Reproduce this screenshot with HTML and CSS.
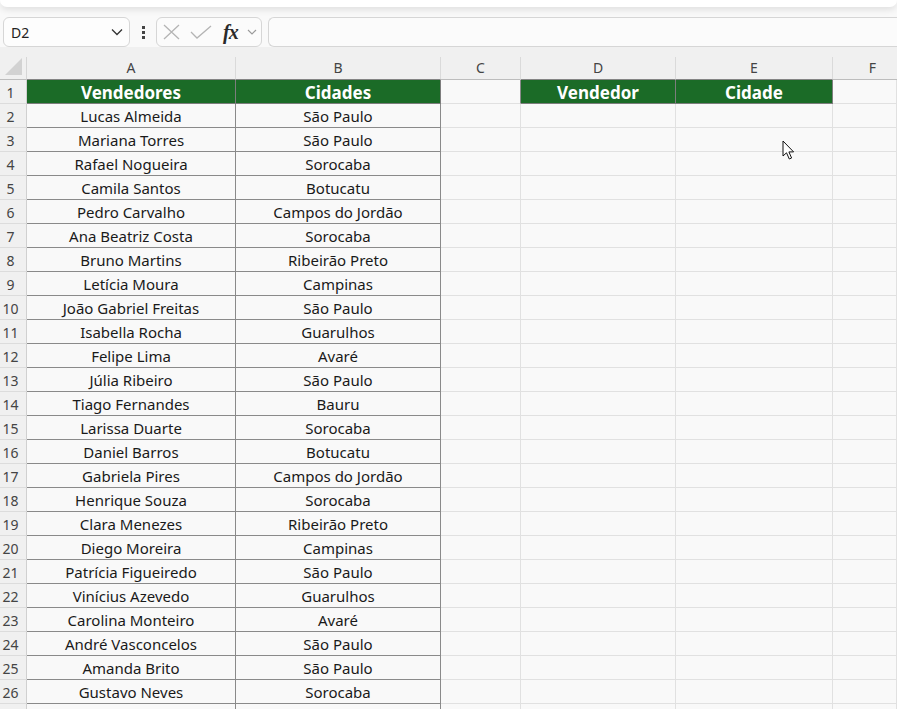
FILE: index.html
```html
<!DOCTYPE html>
<html lang="pt-BR">
<head>
    <meta charset="UTF-8">
    <title>Planilha - Vendedores</title>
    <link rel="stylesheet" href="styles.css">
</head>
<body>
    <div class="topbar"></div>

    <div class="formula-bar">
        <div class="name-box">
            <span>D2</span>
            <svg class="chev" width="12" height="8" viewBox="0 0 12 8"><path d="M1 1.5 L6 6.5 L11 1.5" fill="none" stroke="#333" stroke-width="1.3"/></svg>
        </div>
        <div class="dots"><span></span><span></span><span></span></div>
        <div class="fx-box">
            <svg width="17" height="16" viewBox="0 0 17 16"><path d="M1 1 L16 15 M16 1 L1 15" stroke="#b4b4b4" stroke-width="1.3" fill="none"/></svg>
            <svg width="22" height="14" viewBox="0 0 22 14"><path d="M1 7 L7 13 L21 1" stroke="#b4b4b4" stroke-width="1.3" fill="none"/></svg>
            <span class="fx">fx</span>
            <svg width="10" height="6" viewBox="0 0 10 6"><path d="M1 1 L5 5 L9 1" fill="none" stroke="#999" stroke-width="1.1"/></svg>
        </div>
        <div class="formula-input"></div>
    </div>

    <div class="sheet">
        <div class="col-heads">
            <div class="corner"><span class="tri"></span></div>
            <div class="ch dark">A</div>
            <div class="ch dark">B</div>
            <div class="ch">C</div>
            <div class="ch dark">D</div>
            <div class="ch dark">E</div>
            <div class="ch">F</div>
        </div>

        <div class="row"><div class="rh">1</div><div class="c head">Vendedores</div><div class="c head">Cidades</div><div class="c edge"></div><div class="c head">Vendedor</div><div class="c head">Cidade</div><div class="c"></div></div>
        <div class="row"><div class="rh">2</div><div class="c t">Lucas Almeida</div><div class="c t">São Paulo</div><div class="c"></div><div class="c"></div><div class="c"></div><div class="c"></div></div>
        <div class="row"><div class="rh">3</div><div class="c t">Mariana Torres</div><div class="c t">São Paulo</div><div class="c"></div><div class="c"></div><div class="c"></div><div class="c"></div></div>
        <div class="row"><div class="rh">4</div><div class="c t">Rafael Nogueira</div><div class="c t">Sorocaba</div><div class="c"></div><div class="c"></div><div class="c"></div><div class="c"></div></div>
        <div class="row"><div class="rh">5</div><div class="c t">Camila Santos</div><div class="c t">Botucatu</div><div class="c"></div><div class="c"></div><div class="c"></div><div class="c"></div></div>
        <div class="row"><div class="rh">6</div><div class="c t">Pedro Carvalho</div><div class="c t">Campos do Jordão</div><div class="c"></div><div class="c"></div><div class="c"></div><div class="c"></div></div>
        <div class="row"><div class="rh">7</div><div class="c t">Ana Beatriz Costa</div><div class="c t">Sorocaba</div><div class="c"></div><div class="c"></div><div class="c"></div><div class="c"></div></div>
        <div class="row"><div class="rh">8</div><div class="c t">Bruno Martins</div><div class="c t">Ribeirão Preto</div><div class="c"></div><div class="c"></div><div class="c"></div><div class="c"></div></div>
        <div class="row"><div class="rh">9</div><div class="c t">Letícia Moura</div><div class="c t">Campinas</div><div class="c"></div><div class="c"></div><div class="c"></div><div class="c"></div></div>
        <div class="row"><div class="rh">10</div><div class="c t">João Gabriel Freitas</div><div class="c t">São Paulo</div><div class="c"></div><div class="c"></div><div class="c"></div><div class="c"></div></div>
        <div class="row"><div class="rh">11</div><div class="c t">Isabella Rocha</div><div class="c t">Guarulhos</div><div class="c"></div><div class="c"></div><div class="c"></div><div class="c"></div></div>
        <div class="row"><div class="rh">12</div><div class="c t">Felipe Lima</div><div class="c t">Avaré</div><div class="c"></div><div class="c"></div><div class="c"></div><div class="c"></div></div>
        <div class="row"><div class="rh">13</div><div class="c t">Júlia Ribeiro</div><div class="c t">São Paulo</div><div class="c"></div><div class="c"></div><div class="c"></div><div class="c"></div></div>
        <div class="row"><div class="rh">14</div><div class="c t">Tiago Fernandes</div><div class="c t">Bauru</div><div class="c"></div><div class="c"></div><div class="c"></div><div class="c"></div></div>
        <div class="row"><div class="rh">15</div><div class="c t">Larissa Duarte</div><div class="c t">Sorocaba</div><div class="c"></div><div class="c"></div><div class="c"></div><div class="c"></div></div>
        <div class="row"><div class="rh">16</div><div class="c t">Daniel Barros</div><div class="c t">Botucatu</div><div class="c"></div><div class="c"></div><div class="c"></div><div class="c"></div></div>
        <div class="row"><div class="rh">17</div><div class="c t">Gabriela Pires</div><div class="c t">Campos do Jordão</div><div class="c"></div><div class="c"></div><div class="c"></div><div class="c"></div></div>
        <div class="row"><div class="rh">18</div><div class="c t">Henrique Souza</div><div class="c t">Sorocaba</div><div class="c"></div><div class="c"></div><div class="c"></div><div class="c"></div></div>
        <div class="row"><div class="rh">19</div><div class="c t">Clara Menezes</div><div class="c t">Ribeirão Preto</div><div class="c"></div><div class="c"></div><div class="c"></div><div class="c"></div></div>
        <div class="row"><div class="rh">20</div><div class="c t">Diego Moreira</div><div class="c t">Campinas</div><div class="c"></div><div class="c"></div><div class="c"></div><div class="c"></div></div>
        <div class="row"><div class="rh">21</div><div class="c t">Patrícia Figueiredo</div><div class="c t">São Paulo</div><div class="c"></div><div class="c"></div><div class="c"></div><div class="c"></div></div>
        <div class="row"><div class="rh">22</div><div class="c t">Vinícius Azevedo</div><div class="c t">Guarulhos</div><div class="c"></div><div class="c"></div><div class="c"></div><div class="c"></div></div>
        <div class="row"><div class="rh">23</div><div class="c t">Carolina Monteiro</div><div class="c t">Avaré</div><div class="c"></div><div class="c"></div><div class="c"></div><div class="c"></div></div>
        <div class="row"><div class="rh">24</div><div class="c t">André Vasconcelos</div><div class="c t">São Paulo</div><div class="c"></div><div class="c"></div><div class="c"></div><div class="c"></div></div>
        <div class="row"><div class="rh">25</div><div class="c t">Amanda Brito</div><div class="c t">São Paulo</div><div class="c"></div><div class="c"></div><div class="c"></div><div class="c"></div></div>
        <div class="row"><div class="rh">26</div><div class="c t">Gustavo Neves</div><div class="c t">Sorocaba</div><div class="c"></div><div class="c"></div><div class="c"></div><div class="c"></div></div>
        <div class="row"><div class="rh"></div><div class="c t"></div><div class="c t"></div><div class="c"></div><div class="c"></div><div class="c"></div><div class="c"></div></div>

        <svg class="pointer" width="14" height="21" viewBox="0 0 14 21"><path d="M1 1 L1 16 L4.5 12.8 L7.3 19 L9.6 18 L6.9 11.9 L11.6 11.9 Z" fill="#fff" stroke="#111" stroke-width="1" stroke-linejoin="miter"/></svg>
    </div>
</body>
</html>
```

FILE: styles.css
```css
* {
    margin: 0;
    padding: 0;
    box-sizing: border-box;
}

body {
    font-family: 'Noto Sans', 'Open Sans', sans-serif;
    background: #f9f9f9;
    width: 897px;
    height: 709px;
    overflow: hidden;
    color: #1a1a1a;
}

.topbar {
    height: 7px;
    background: #fff;
    border-radius: 0 0 8px 8px;
    box-shadow: 0 2px 7px rgba(0,0,0,0.13);
}

.formula-bar {
    margin-top: 10px;
    height: 30px;
    display: flex;
    align-items: stretch;
    padding-left: 3px;
}

.name-box {
    width: 127px;
    background: #fdfdfd;
    border: 1px solid #d6d6d6;
    border-radius: 6px;
    display: flex;
    align-items: center;
    justify-content: space-between;
    padding: 0 6px 0 7px;
    font-size: 14px;
    color: #222;
}

.dots {
    width: 26px;
    display: flex;
    flex-direction: column;
    align-items: center;
    justify-content: center;
    gap: 2px;
}

.dots span {
    width: 3px;
    height: 3px;
    background: #444;
}

.fx-box {
    width: 106px;
    border: 1px solid #d6d6d6;
    border-radius: 6px;
    background: #fbfbfb;
    display: flex;
    align-items: center;
    padding-left: 6px;
}

.fx-box svg:nth-child(2) {
    margin-left: 10px;
}

.fx-box .fx {
    font-family: 'Liberation Serif', 'DejaVu Serif', serif;
    font-style: italic;
    font-weight: bold;
    font-size: 20px;
    line-height: 1;
    color: #2a2a2a;
    margin-left: 11px;
    letter-spacing: -1px;
}

.fx-box svg:last-child {
    margin-left: 9px;
}

.formula-input {
    flex: 1;
    margin-left: 6px;
    background: #fbfbfb;
    border: 1px solid #d6d6d6;
    border-right: none;
    border-radius: 6px 0 0 6px;
}

.sheet {
    position: relative;
}

.col-heads {
    display: grid;
    grid-template-columns: 27px 209px 205px 80px 155px 157px 80px 1fr;
    background: #f0f0f0;
    padding-top: 10px;
}

.corner {
    height: 23px;
    border-right: 1px solid #d6d6d6;
    border-bottom: 1px solid #bdbdbd;
    position: relative;
}

.tri {
    position: absolute;
    right: 4px;
    bottom: 4px;
    width: 0;
    height: 0;
    border-left: 17px solid transparent;
    border-bottom: 17px solid #d2d2d2;
}

.ch {
    height: 23px;
    border-right: 1px solid #dadada;
    border-bottom: 1px solid #bdbdbd;
    text-align: center;
    font-size: 14px;
    line-height: 21px;
    color: #444;
}

.ch.dark {
    border-bottom-color: #858585;
}

.row {
    display: grid;
    grid-template-columns: 27px 209px 205px 80px 155px 157px 1fr;
    height: 24px;
}

.rh {
    background: #f0f0f0;
    border-right: 1px solid #d0d0d0;
    border-bottom: 1px solid #dcdcdc;
    font-size: 14px;
    padding-top: 2px;
    line-height: 21px;
    color: #444;
    text-align: center;
    padding-right: 5px;
}

.c {
    border-right: 1px solid #e1e1e1;
    border-bottom: 1px solid #e1e1e1;
    font-size: 15px;
    padding-top: 2px;
    line-height: 21px;
    text-align: center;
    white-space: nowrap;
    overflow: hidden;
}

.c.t {
    border-color: #8a8a8a;
}

.c.edge {
    border-right-color: #8a8a8a;
}

.c.head {
    background: #1b6b27;
    border-color: #7d7d7d;
    color: #fff;
    font-weight: bold;
    font-size: 17px;
}

.pointer {
    position: absolute;
    left: 782px;
    top: 93px;
}
```
